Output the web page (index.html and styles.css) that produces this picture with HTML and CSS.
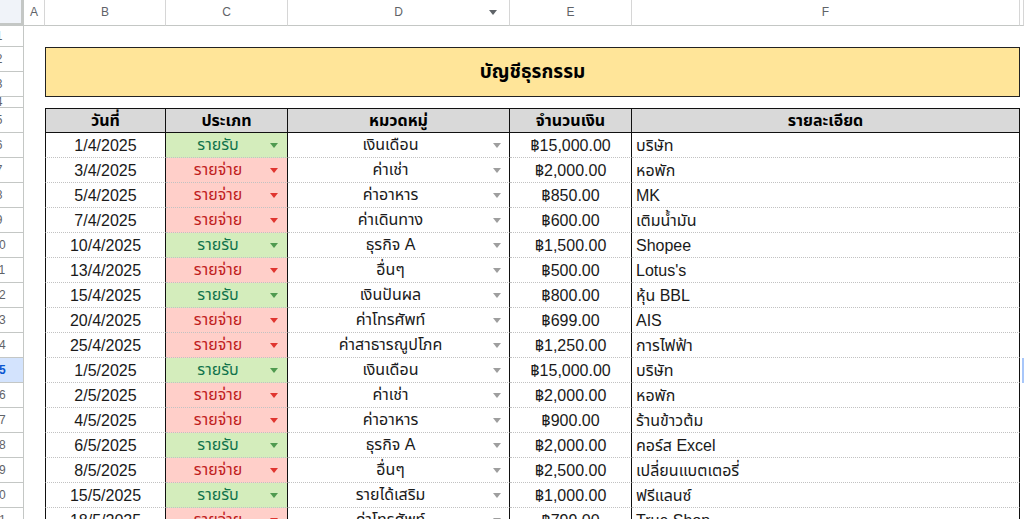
FILE: index.html
```html
<!DOCTYPE html>
<html lang="th">
<head>
  <meta charset="UTF-8">
  <title>บัญชีธุรกรรม</title>
  <link rel="stylesheet" href="styles.css">
</head>
<body>
  <div class="sheet">

    <div class="row col-heads">
      <div class="corner"></div>
      <div class="col-head">A</div>
      <div class="col-head">B</div>
      <div class="col-head">C</div>
      <div class="col-head filter"><span></span><span>D</span><i class="filter-arrow"></i></div>
      <div class="col-head">E</div>
      <div class="col-head">F</div>
      <div class="col-head"></div>
    </div>

    <div class="row gap-top">
      <div class="row-head"><span>1</span></div>
    </div>

    <div class="row title-row">
      <div class="row-head r1"><span>2</span></div>
      <div class="row-head r2"><span>3</span></div>
      <div class="title">บัญชีธุรกรรม</div>
    </div>

    <div class="row gap-small">
      <div class="row-head"><span>4</span></div>
    </div>

    <div class="row table-head">
      <div class="row-head"><span>5</span></div>
      <div></div>
      <div class="cell first">วันที่</div>
      <div class="cell">ประเภท</div>
      <div class="cell">หมวดหมู่</div>
      <div class="cell">จำนวนเงิน</div>
      <div class="cell">รายละเอียด</div>
      <div></div>
    </div>

    <div class="row">
      <div class="row-head"><span>6</span></div>
      <div></div>
      <div class="cell first">1/4/2025</div>
      <div class="cell type in"><span>รายรับ</span><i class="arrow"></i></div>
      <div class="cell pick"><span>เงินเดือน</span><i class="arrow"></i></div>
      <div class="cell">฿15,000.00</div>
      <div class="cell note">บริษัท</div>
      <div></div>
    </div>

    <div class="row">
      <div class="row-head"><span>7</span></div>
      <div></div>
      <div class="cell first">3/4/2025</div>
      <div class="cell type out"><span>รายจ่าย</span><i class="arrow"></i></div>
      <div class="cell pick"><span>ค่าเช่า</span><i class="arrow"></i></div>
      <div class="cell">฿2,000.00</div>
      <div class="cell note">หอพัก</div>
      <div></div>
    </div>

    <div class="row">
      <div class="row-head"><span>8</span></div>
      <div></div>
      <div class="cell first">5/4/2025</div>
      <div class="cell type out"><span>รายจ่าย</span><i class="arrow"></i></div>
      <div class="cell pick"><span>ค่าอาหาร</span><i class="arrow"></i></div>
      <div class="cell">฿850.00</div>
      <div class="cell note">MK</div>
      <div></div>
    </div>

    <div class="row">
      <div class="row-head"><span>9</span></div>
      <div></div>
      <div class="cell first">7/4/2025</div>
      <div class="cell type out"><span>รายจ่าย</span><i class="arrow"></i></div>
      <div class="cell pick"><span>ค่าเดินทาง</span><i class="arrow"></i></div>
      <div class="cell">฿600.00</div>
      <div class="cell note">เติมน้ำมัน</div>
      <div></div>
    </div>

    <div class="row">
      <div class="row-head"><span>10</span></div>
      <div></div>
      <div class="cell first">10/4/2025</div>
      <div class="cell type in"><span>รายรับ</span><i class="arrow"></i></div>
      <div class="cell pick"><span>ธุรกิจ A</span><i class="arrow"></i></div>
      <div class="cell">฿1,500.00</div>
      <div class="cell note">Shopee</div>
      <div></div>
    </div>

    <div class="row">
      <div class="row-head"><span>11</span></div>
      <div></div>
      <div class="cell first">13/4/2025</div>
      <div class="cell type out"><span>รายจ่าย</span><i class="arrow"></i></div>
      <div class="cell pick"><span>อื่นๆ</span><i class="arrow"></i></div>
      <div class="cell">฿500.00</div>
      <div class="cell note">Lotus's</div>
      <div></div>
    </div>

    <div class="row">
      <div class="row-head"><span>12</span></div>
      <div></div>
      <div class="cell first">15/4/2025</div>
      <div class="cell type in"><span>รายรับ</span><i class="arrow"></i></div>
      <div class="cell pick"><span>เงินปันผล</span><i class="arrow"></i></div>
      <div class="cell">฿800.00</div>
      <div class="cell note">หุ้น BBL</div>
      <div></div>
    </div>

    <div class="row">
      <div class="row-head"><span>13</span></div>
      <div></div>
      <div class="cell first">20/4/2025</div>
      <div class="cell type out"><span>รายจ่าย</span><i class="arrow"></i></div>
      <div class="cell pick"><span>ค่าโทรศัพท์</span><i class="arrow"></i></div>
      <div class="cell">฿699.00</div>
      <div class="cell note">AIS</div>
      <div></div>
    </div>

    <div class="row">
      <div class="row-head"><span>14</span></div>
      <div></div>
      <div class="cell first">25/4/2025</div>
      <div class="cell type out"><span>รายจ่าย</span><i class="arrow"></i></div>
      <div class="cell pick"><span>ค่าสาธารณูปโภค</span><i class="arrow"></i></div>
      <div class="cell">฿1,250.00</div>
      <div class="cell note">การไฟฟ้า</div>
      <div></div>
    </div>

    <div class="row">
      <div class="row-head active"><span>15</span></div>
      <div></div>
      <div class="cell first">1/5/2025</div>
      <div class="cell type in"><span>รายรับ</span><i class="arrow"></i></div>
      <div class="cell pick"><span>เงินเดือน</span><i class="arrow"></i></div>
      <div class="cell">฿15,000.00</div>
      <div class="cell note">บริษัท</div>
      <div class="selected"></div>
    </div>

    <div class="row">
      <div class="row-head"><span>16</span></div>
      <div></div>
      <div class="cell first">2/5/2025</div>
      <div class="cell type out"><span>รายจ่าย</span><i class="arrow"></i></div>
      <div class="cell pick"><span>ค่าเช่า</span><i class="arrow"></i></div>
      <div class="cell">฿2,000.00</div>
      <div class="cell note">หอพัก</div>
      <div></div>
    </div>

    <div class="row">
      <div class="row-head"><span>17</span></div>
      <div></div>
      <div class="cell first">4/5/2025</div>
      <div class="cell type out"><span>รายจ่าย</span><i class="arrow"></i></div>
      <div class="cell pick"><span>ค่าอาหาร</span><i class="arrow"></i></div>
      <div class="cell">฿900.00</div>
      <div class="cell note">ร้านข้าวต้ม</div>
      <div></div>
    </div>

    <div class="row">
      <div class="row-head"><span>18</span></div>
      <div></div>
      <div class="cell first">6/5/2025</div>
      <div class="cell type in"><span>รายรับ</span><i class="arrow"></i></div>
      <div class="cell pick"><span>ธุรกิจ A</span><i class="arrow"></i></div>
      <div class="cell">฿2,000.00</div>
      <div class="cell note">คอร์ส Excel</div>
      <div></div>
    </div>

    <div class="row">
      <div class="row-head"><span>19</span></div>
      <div></div>
      <div class="cell first">8/5/2025</div>
      <div class="cell type out"><span>รายจ่าย</span><i class="arrow"></i></div>
      <div class="cell pick"><span>อื่นๆ</span><i class="arrow"></i></div>
      <div class="cell">฿2,500.00</div>
      <div class="cell note">เปลี่ยนแบตเตอรี่</div>
      <div></div>
    </div>

    <div class="row">
      <div class="row-head"><span>20</span></div>
      <div></div>
      <div class="cell first">15/5/2025</div>
      <div class="cell type in"><span>รายรับ</span><i class="arrow"></i></div>
      <div class="cell pick"><span>รายได้เสริม</span><i class="arrow"></i></div>
      <div class="cell">฿1,000.00</div>
      <div class="cell note">ฟรีแลนซ์</div>
      <div></div>
    </div>

    <div class="row">
      <div class="row-head"><span>21</span></div>
      <div></div>
      <div class="cell first">18/5/2025</div>
      <div class="cell type out"><span>รายจ่าย</span><i class="arrow"></i></div>
      <div class="cell pick"><span>ค่าโทรศัพท์</span><i class="arrow"></i></div>
      <div class="cell">฿799.00</div>
      <div class="cell note">True Shop</div>
      <div></div>
    </div>

  </div>
</body>
</html>
```

FILE: styles.css
```css
body {
  margin: 0;
  height: 519px;
  overflow: hidden;
  background: #ffffff;
  font-family: 'Liberation Sans', Arial, 'Noto Sans Thai', Tahoma, sans-serif;
  color: #1f1f1f;
}

.sheet {
  display: flex;
  flex-direction: column;
}

.row {
  display: grid;
  grid-template-columns: 24px 21px 121px 122px 222px 122px 388px 1fr;
  height: 25px;
}

/* column letters */
.col-heads {
  height: 26px;
}

.corner {
  background: #f0f3f9;
  border-right: 3px solid #c4c7c5;
  border-bottom: 3px solid #c4c7c5;
}

.col-head {
  border-right: 1px solid #d6d6d6;
  border-bottom: 1px solid #c4c7c5;
  font-size: 12px;
  color: #5f6368;
  text-align: center;
  line-height: 25px;
}

.filter {
  display: grid;
  grid-template-columns: 1fr auto 1fr;
  align-items: center;
}

.filter-arrow {
  justify-self: end;
  margin-right: 12px;
  border-left: 4px solid transparent;
  border-right: 4px solid transparent;
  border-top: 5px solid #5f6368;
}

/* row numbers, cut on the left edge */
.row-head {
  overflow: hidden;
  border-right: 1px solid #c4c7c5;
  border-bottom: 1px solid #c4c7c5;
  font-size: 12px;
  color: #5f6368;
  display: flex;
  align-items: center;
}

.row-head span {
  flex: none;
  width: 46px;
  margin-left: -24px;
  text-align: center;
}

.row-head.active {
  background: #d3e3fd;
  color: #0b57d0;
  font-weight: bold;
}

.gap-top {
  height: 21px;
}

.gap-small {
  height: 11px;
}

.title-row {
  height: 50px;
  grid-template-rows: 25px 25px;
}

.r1 {
  grid-column: 1;
  grid-row: 1;
}

.r2 {
  grid-column: 1;
  grid-row: 2;
}

.title {
  grid-column: 3 / 8;
  grid-row: 1 / 3;
  background: #ffe599;
  border: 1px solid #222;
  display: flex;
  align-items: center;
  justify-content: center;
  font-size: 19px;
  font-weight: bold;
  color: #000;
}

/* table */
.cell {
  border-right: 1px solid #111;
  border-bottom: 1px dotted #c2c2c2;
  font-size: 16px;
  line-height: 26px;
  text-align: center;
  white-space: nowrap;
  overflow: hidden;
  color: #1a1a1a;
}

.cell.first {
  border-left: 1px solid #111;
}

.table-head .cell {
  background: #d9d9d9;
  font-weight: bold;
  color: #000;
  border-top: 1px solid #111;
  border-bottom: 1px solid #111;
  line-height: 24px;
}

.type, .pick {
  display: flex;
  align-items: center;
}

.type span, .pick span {
  flex: 1;
  text-align: center;
}

.arrow {
  flex: none;
  border-left: 4px solid transparent;
  border-right: 4px solid transparent;
  border-top: 5px solid #9e9e9e;
}

.type .arrow {
  margin-right: 9px;
}

.pick .arrow {
  margin-right: 8px;
}

.in {
  background: #d4edbc;
  color: #11734b;
}

.in .arrow {
  border-top-color: #4f9a4f;
}

.out {
  background: #ffcfc9;
  color: #c0201c;
}

.out .arrow {
  border-top-color: #e0352f;
}

.note {
  text-align: left;
  padding-left: 4px;
}

.selected {
  margin-left: 2px;
  background: #a8c7fa;
}
```
